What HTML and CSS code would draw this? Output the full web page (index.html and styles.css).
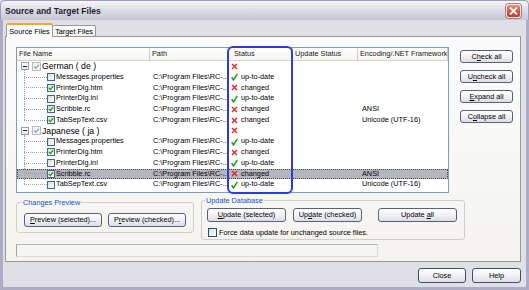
FILE: index.html
```html
<!DOCTYPE html>
<html lang="en">

<head>
    <meta charset="UTF-8" />
    <title>Source and Target Files</title>
    <link rel="stylesheet" href="styles.css">
</head>

<body>
    <div class="window">
        <div class="titlebar">
            <span class="title">Source and Target Files</span>
            <span class="close-x"><svg width="9" height="8" viewBox="0 0 9 8"><path d="M1 0.5 L8 7.5 M8 0.5 L1 7.5" stroke="#fff" stroke-width="1.8" /></svg></span>
        </div>

        <div class="client">
            <div class="tabs">
                <div class="tab active">Source Files</div>
                <div class="tab">Target Files</div>
            </div>

            <div class="panel">
                <div class="top">
                    <div class="list">
                        <div class="row head">
                            <div class="cell">File Name</div>
                            <div class="cell">Path</div>
                            <div class="cell st-head">Status</div>
                            <div class="cell">Update Status</div>
                            <div class="cell">Encoding/.NET Framework</div>
                        </div>

                        <!-- German -->
                        <div class="row">
                            <div class="cell name"><span class="exp"><span class="box"></span></span><span class="cb group"><svg width="7" height="7" viewBox="0 0 7 7"><path d="M1 3.5 L2.8 5.3 L6 1.6" fill="none" stroke="#a4a4a4" stroke-width="1.3" /></svg></span><span class="glabel">German ( de )</span></div>
                            <div class="cell"></div>
                            <div class="cell status"><svg class="ic" width="7" height="7" viewBox="0 0 7 7"><path d="M1 1 L6 6 M6 1 L1 6" stroke="#e4261f" stroke-width="1.4" /></svg></div>
                            <div class="cell"></div>
                            <div class="cell"></div>
                        </div>
                        <div class="row">
                            <div class="cell name"><span class="branch"></span><span class="cb"></span>Messages.properties</div>
                            <div class="cell path">C:\Program Files\RC-...</div>
                            <div class="cell status"><svg class="ic" width="7" height="8" viewBox="0 0 7 8"><path d="M0.7 4.3 L2.5 6.9 L6.4 0.8" fill="none" stroke="#1c9a1c" stroke-width="1.5" /></svg>up-to-date</div>
                            <div class="cell"></div>
                            <div class="cell"></div>
                        </div>
                        <div class="row">
                            <div class="cell name"><span class="branch"></span><span class="cb"><svg width="6" height="6" viewBox="0 0 6 6"><path d="M0.8 3 L2.3 4.5 L5.2 1.2" fill="none" stroke="#21a121" stroke-width="1.3" /></svg></span>PrinterDlg.htm</div>
                            <div class="cell path">C:\Program Files\RC-...</div>
                            <div class="cell status"><svg class="ic" width="7" height="7" viewBox="0 0 7 7"><path d="M1 1 L6 6 M6 1 L1 6" stroke="#e4261f" stroke-width="1.4" /></svg>changed</div>
                            <div class="cell"></div>
                            <div class="cell"></div>
                        </div>
                        <div class="row">
                            <div class="cell name"><span class="branch"></span><span class="cb"></span>PrinterDlg.ini</div>
                            <div class="cell path">C:\Program Files\RC-...</div>
                            <div class="cell status"><svg class="ic" width="7" height="8" viewBox="0 0 7 8"><path d="M0.7 4.3 L2.5 6.9 L6.4 0.8" fill="none" stroke="#1c9a1c" stroke-width="1.5" /></svg>up-to-date</div>
                            <div class="cell"></div>
                            <div class="cell"></div>
                        </div>
                        <div class="row">
                            <div class="cell name"><span class="branch"></span><span class="cb"><svg width="6" height="6" viewBox="0 0 6 6"><path d="M0.8 3 L2.3 4.5 L5.2 1.2" fill="none" stroke="#21a121" stroke-width="1.3" /></svg></span>Scribble.rc</div>
                            <div class="cell path">C:\Program Files\RC-...</div>
                            <div class="cell status"><svg class="ic" width="7" height="7" viewBox="0 0 7 7"><path d="M1 1 L6 6 M6 1 L1 6" stroke="#e4261f" stroke-width="1.4" /></svg>changed</div>
                            <div class="cell"></div>
                            <div class="cell enc">ANSI</div>
                        </div>
                        <div class="row">
                            <div class="cell name"><span class="branch last"></span><span class="cb"><svg width="6" height="6" viewBox="0 0 6 6"><path d="M0.8 3 L2.3 4.5 L5.2 1.2" fill="none" stroke="#21a121" stroke-width="1.3" /></svg></span>TabSepText.csv</div>
                            <div class="cell path">C:\Program Files\RC-...</div>
                            <div class="cell status"><svg class="ic" width="7" height="7" viewBox="0 0 7 7"><path d="M1 1 L6 6 M6 1 L1 6" stroke="#e4261f" stroke-width="1.4" /></svg>changed</div>
                            <div class="cell"></div>
                            <div class="cell enc">Unicode (UTF-16)</div>
                        </div>

                        <!-- Japanese -->
                        <div class="row">
                            <div class="cell name"><span class="exp"><span class="box"></span></span><span class="cb group"><svg width="7" height="7" viewBox="0 0 7 7"><path d="M1 3.5 L2.8 5.3 L6 1.6" fill="none" stroke="#a4a4a4" stroke-width="1.3" /></svg></span><span class="glabel">Japanese ( ja )</span></div>
                            <div class="cell"></div>
                            <div class="cell status"><svg class="ic" width="7" height="7" viewBox="0 0 7 7"><path d="M1 1 L6 6 M6 1 L1 6" stroke="#e4261f" stroke-width="1.4" /></svg></div>
                            <div class="cell"></div>
                            <div class="cell"></div>
                        </div>
                        <div class="row">
                            <div class="cell name"><span class="branch"></span><span class="cb"></span>Messages.properties</div>
                            <div class="cell path">C:\Program Files\RC-...</div>
                            <div class="cell status"><svg class="ic" width="7" height="8" viewBox="0 0 7 8"><path d="M0.7 4.3 L2.5 6.9 L6.4 0.8" fill="none" stroke="#1c9a1c" stroke-width="1.5" /></svg>up-to-date</div>
                            <div class="cell"></div>
                            <div class="cell"></div>
                        </div>
                        <div class="row">
                            <div class="cell name"><span class="branch"></span><span class="cb"><svg width="6" height="6" viewBox="0 0 6 6"><path d="M0.8 3 L2.3 4.5 L5.2 1.2" fill="none" stroke="#21a121" stroke-width="1.3" /></svg></span>PrinterDlg.htm</div>
                            <div class="cell path">C:\Program Files\RC-...</div>
                            <div class="cell status"><svg class="ic" width="7" height="7" viewBox="0 0 7 7"><path d="M1 1 L6 6 M6 1 L1 6" stroke="#e4261f" stroke-width="1.4" /></svg>changed</div>
                            <div class="cell"></div>
                            <div class="cell"></div>
                        </div>
                        <div class="row">
                            <div class="cell name"><span class="branch"></span><span class="cb"></span>PrinterDlg.ini</div>
                            <div class="cell path">C:\Program Files\RC-...</div>
                            <div class="cell status"><svg class="ic" width="7" height="8" viewBox="0 0 7 8"><path d="M0.7 4.3 L2.5 6.9 L6.4 0.8" fill="none" stroke="#1c9a1c" stroke-width="1.5" /></svg>up-to-date</div>
                            <div class="cell"></div>
                            <div class="cell"></div>
                        </div>
                        <div class="row sel">
                            <div class="cell name"><span class="branch"></span><span class="cb"><svg width="6" height="6" viewBox="0 0 6 6"><path d="M0.8 3 L2.3 4.5 L5.2 1.2" fill="none" stroke="#21a121" stroke-width="1.3" /></svg></span>Scribble.rc</div>
                            <div class="cell path">C:\Program Files\RC-...</div>
                            <div class="cell status"><svg class="ic" width="7" height="7" viewBox="0 0 7 7"><path d="M1 1 L6 6 M6 1 L1 6" stroke="#e4261f" stroke-width="1.4" /></svg>changed</div>
                            <div class="cell"></div>
                            <div class="cell enc">ANSI</div>
                        </div>
                        <div class="row">
                            <div class="cell name"><span class="branch last"></span><span class="cb"></span>TabSepText.csv</div>
                            <div class="cell path">C:\Program Files\RC-...</div>
                            <div class="cell status"><svg class="ic" width="7" height="8" viewBox="0 0 7 8"><path d="M0.7 4.3 L2.5 6.9 L6.4 0.8" fill="none" stroke="#1c9a1c" stroke-width="1.5" /></svg>up-to-date</div>
                            <div class="cell"></div>
                            <div class="cell enc">Unicode (UTF-16)</div>
                        </div>

                        <!-- annotation around the status column -->
                        <div class="status-frame"></div>
                    </div>

                    <div class="side">
                        <button class="btn">C<u>h</u>eck all</button>
                        <button class="btn">U<u>n</u>check all</button>
                        <button class="btn"><u>E</u>xpand all</button>
                        <button class="btn">C<u>o</u>llapse all</button>
                    </div>
                </div>

                <div class="bottom">
                    <fieldset class="preview">
                        <legend>Changes Preview</legend>
                        <div class="btn-row">
                            <button class="btn wide"><u>P</u>review (selected)...</button>
                            <button class="btn wide">P<u>r</u>eview (checked)...</button>
                        </div>
                    </fieldset>
                    <fieldset class="update">
                        <legend>Update Database</legend>
                        <div class="btn-row">
                            <button class="btn upd-sel"><u>U</u>pdate (selected)</button>
                            <button class="btn upd-chk">Up<u>d</u>ate (checked)</button>
                            <button class="btn upd-all">Update <u>a</u>ll</button>
                        </div>
                        <label class="force"><span class="cb"></span>Force data update for unchanged source files.</label>
                    </fieldset>
                </div>

                <div class="progress"></div>
            </div>

            <div class="footer">
                <button class="btn close">Close</button>
                <button class="btn help">Help</button>
            </div>
        </div>
    </div>
</body>

</html>
```

FILE: styles.css
```css
body {
    margin: 0;
    font-family: "Liberation Sans", Arial, sans-serif;
    font-size: 7.3px;
    color: #000;
    background: #fff;
}

.window {
    width: 529px;
    height: 290px;
    display: flex;
    flex-direction: column;
    background: #e0dfe3;
}

/* title bar */
.titlebar {
    height: 20px;
    flex: none;
    box-sizing: border-box;
    display: flex;
    align-items: center;
    justify-content: space-between;
    padding: 0 7px 0 4px;
    background: linear-gradient(#f6f6f9, #e2e2ea 35%, #d3d3de 70%, #c6c6d4);
    border: 1px solid #9d9db8;
    border-bottom: none;
    border-radius: 5px 5px 0 0;
}

.title {
    font-size: 8.5px;
    font-weight: bold;
    color: #1e1e30;
}

.close-x {
    width: 15px;
    height: 14px;
    box-sizing: border-box;
    display: flex;
    align-items: center;
    justify-content: center;
    border: 1px solid #f4f0f0;
    border-radius: 3px;
    background: linear-gradient(#ec8d78, #d9533f 55%, #c43c2c);
    box-shadow: 0 0 0 1px #b87a78;
}

.client {
    flex: 1;
    display: flex;
    flex-direction: column;
    border: 3px solid #acacc6;
    border-top: none;
    padding: 3px 5px 0 2px;
}

/* tabs */
.tabs {
    height: 13px;
    display: flex;
    align-items: flex-end;
    padding-left: 1px;
    position: relative;
    z-index: 1;
}

.tab {
    height: 11px;
    box-sizing: border-box;
    padding: 0;
    white-space: nowrap;
    display: flex;
    align-items: center;
    justify-content: center;
    border: 1px solid #919b9c;
    border-bottom: none;
    border-radius: 2px 2px 0 0;
    background: linear-gradient(#fefefe, #f0f0ec);
}

.tab.active {
    height: 14px;
    margin-bottom: -1px;
    width: 47px;
    border-top: 2px solid #f2a53b;
    background: #fcfcfe;
}

.tab + .tab {
    width: 43px;
    border-left: none;
}

.panel {
    height: 226px;
    box-sizing: border-box;
    border: 1px solid #919b9c;
    background: linear-gradient(#fcfcfe, #f4f3ee);
    padding: 10px 0 0 10px;
    display: flex;
    flex-direction: column;
}

.top {
    display: flex;
    gap: 11px;
}

/* list view */
.list {
    width: 433px;
    height: 146px;
    box-sizing: border-box;
    border: 1px solid #7f9db9;
    background: #fff;
    position: relative;
}

.row {
    display: grid;
    grid-template-columns: 133px 79px 64px 65px 90px;
    height: 10.75px;
    line-height: 10.75px;
}

.cell {
    white-space: nowrap;
    overflow: hidden;
    display: flex;
    align-items: center;
}

.row.head {
    height: 13px;
    line-height: 12px;
    box-sizing: border-box;
    border-bottom: 1px solid #d5d4c8;
    background: linear-gradient(#ffffff, #f3f3ef);
    color: #222;
}

.row.head .cell {
    padding-left: 2px;
    border-right: 1px solid #cfcfc8;
}

.row.head .st-head {
    padding-left: 5px;
}

.row.sel {
    background: #b6b6bf;
    outline: 1px dotted #4a4a4a;
    outline-offset: -1px;
}

.name {
    padding-left: 3px;
    height: 100%;
}

.exp {
    width: 9px;
    height: 100%;
    margin-right: 3px;
    display: flex;
    align-items: center;
    justify-content: center;
    background: repeating-linear-gradient(to bottom, #a0a0a0 0 1px, transparent 1px 2px) 4px 100% / 1px 50% no-repeat;
}

.box {
    width: 8px;
    height: 8px;
    box-sizing: border-box;
    border: 1px solid #94a2b4;
    background: linear-gradient(#fff, #e6e6e0);
    display: flex;
    align-items: center;
    justify-content: center;
}

.box::before {
    content: "";
    width: 4px;
    height: 1px;
    background: #222;
}

.branch {
    width: 23px;
    height: 100%;
    margin-left: 4px;
    background-image:
        repeating-linear-gradient(to bottom, #a0a0a0 0 1px, transparent 1px 2px),
        repeating-linear-gradient(to right, #a0a0a0 0 1px, transparent 1px 2px);
    background-size: 1px 100%, 100% 1px;
    background-position: 0 0, 0 50%;
    background-repeat: no-repeat;
}

.branch.last {
    background-size: 1px 50%, 100% 1px;
}

.cb {
    width: 8px;
    height: 8px;
    flex: none;
    box-sizing: border-box;
    border: 1px solid #3e6894;
    background: linear-gradient(135deg, #dcdcd6, #fff);
    display: inline-flex;
    align-items: center;
    justify-content: center;
    margin-right: 1px;
}

.cb.group {
    width: 9px;
    height: 9px;
    border-color: #b4bcc6;
    background: #f2f2f0;
}

.glabel {
    font-size: 8.7px;
}

.path {
    padding-left: 3px;
}

.status {
    padding-left: 2px;
}

.ic {
    margin-right: 3px;
}

.enc {
    padding-left: 4px;
}

.status-frame {
    position: absolute;
    left: 210px;
    top: -2px;
    width: 66px;
    height: 148px;
    box-sizing: border-box;
    border: 2px solid #2b3bdf;
    border-radius: 6px;
    pointer-events: none;
}

/* buttons */
.btn {
    font-family: inherit;
    font-size: 7.3px;
    line-height: 10px;
    color: #000;
    padding: 0;
    white-space: nowrap;
    text-align: center;
    box-sizing: border-box;
    border: 1px solid #56627c;
    border-radius: 3px;
    background: linear-gradient(#ffffff, #f2f2f5 50%, #dcdce4);
}

.side {
    display: flex;
    flex-direction: column;
    gap: 7px;
    padding-top: 3px;
}

.side .btn {
    width: 53px;
    height: 13px;
}

.bottom {
    display: flex;
    align-items: flex-start;
    gap: 7px;
    margin-top: 3px;
}

fieldset {
    margin: 0;
    min-width: 0;
    border: 1px solid #d0d0c4;
    border-radius: 3px;
}

legend {
    padding: 0 1px;
    margin-left: -2px;
    color: #1c4fd6;
    line-height: 9px;
}

.btn-row {
    display: flex;
}

.preview {
    margin-top: 2px;
    width: 178px;
    box-sizing: border-box;
    padding: 6px 7px 5px 7px;
}

.preview .btn-row {
    gap: 6px;
}

.btn.wide {
    width: 78px;
    height: 14px;
}

.update {
    width: 264px;
    box-sizing: border-box;
    padding: 3px 7px 2px 5px;
}

.update .btn {
    height: 14px;
}

.upd-sel {
    width: 79px;
}

.upd-chk {
    width: 69px;
    margin-left: 7px;
}

.upd-all {
    width: 79px;
    margin-left: 16px;
}

.force {
    display: flex;
    align-items: center;
    height: 9px;
    margin-top: 6px;
    padding-left: 1px;
}

.force .cb {
    width: 9px;
    height: 9px;
    margin-right: 2px;
    border-color: #1c5180;
}

.progress {
    width: 362px;
    height: 13px;
    margin-top: 4px;
    box-sizing: border-box;
    border: 1px solid #dcdcd4;
    border-top-color: #b8b8b4;
    border-left-color: #a8a8a4;
    background: #f5f5f1;
}

.footer {
    display: flex;
    justify-content: flex-end;
    gap: 6px;
    margin-top: 6px;
}

.footer .btn {
    height: 15px;
    border-color: #3b4f78;
}

.close {
    width: 48px;
}

.help {
    width: 49px;
}
```
